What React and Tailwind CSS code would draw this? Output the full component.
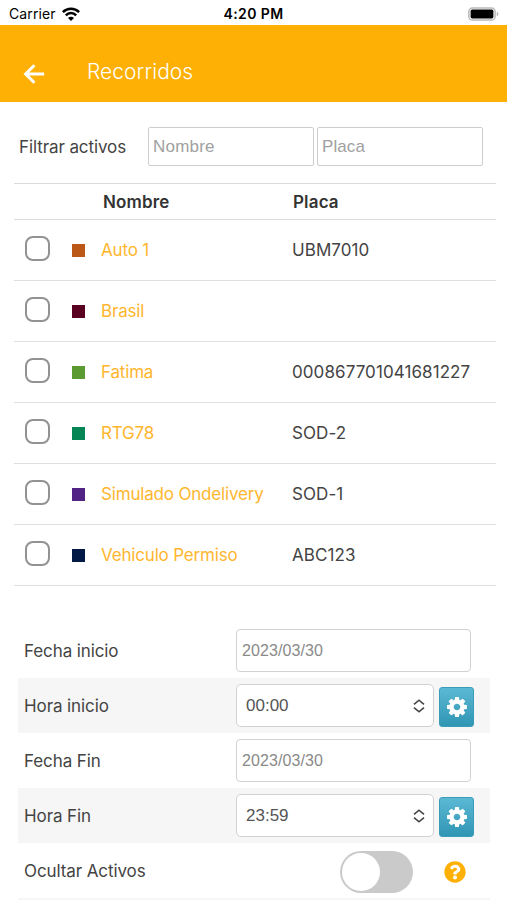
import { FaQuestionCircle } from 'react-icons/fa';

const activos = [
    { nombre: 'Auto 1', placa: 'UBM7010', color: 'bg-[#bb5817]' },
    { nombre: 'Brasil', placa: '', color: 'bg-[#5a0020]' },
    { nombre: 'Fatima', placa: '000867701041681227', color: 'bg-[#5b9a30]' },
    { nombre: 'RTG78', placa: 'SOD-2', color: 'bg-[#058554]' },
    { nombre: 'Simulado Ondelivery', placa: 'SOD-1', color: 'bg-[#512385]' },
    { nombre: 'Vehiculo Permiso', placa: 'ABC123', color: 'bg-[#021945]' },
];

const StatusBar = () => (
    <div className="h-[25px] px-[9px] pt-[3px] grid grid-cols-3 items-center text-black">
        <div className="flex items-center gap-[6px]">
            <span className="text-[14px] leading-5 tracking-[0.1px]">Carrier</span>
            <svg className="w-[18px] h-[14px]" viewBox="0 0 18 14" fill="none" stroke="currentColor" strokeWidth="2.5">
                <path d="M.9 5.1a11.4 11.4 0 0 1 16.2 0" />
                <path d="M3.8 8.3a7.3 7.3 0 0 1 10.4 0" />
                <path d="M9 14l-3-3.1a4.2 4.2 0 0 1 6 0z" fill="currentColor" stroke="none" />
            </svg>
        </div>
        <span className="text-center text-[14px] leading-5 font-semibold tracking-[0.4px]">4:20 PM</span>
        <svg className="-mr-px w-[31px] h-[14px] justify-self-end" viewBox="0 0 31 14">
            <rect x="0.9" y="0.9" width="26.2" height="12.2" rx="3.6" fill="#fff" stroke="#b9b9b9" strokeWidth="1.5" />
            <rect x="2.6" y="2.6" width="22.8" height="8.8" rx="1.6" fill="#000" />
            <path d="M28.8 4.8v4.4q1.6-.7 1.6-2.2t-1.6-2.2z" fill="#b0b0b0" />
        </svg>
    </div>
);

const Header = () => (
    <header className="h-[77px] bg-[#ffb004] pl-[23px] pt-4 flex items-center text-white">
        <svg className="w-[22px] h-5 mt-1" viewBox="0 0 22 20" fill="none" stroke="currentColor" strokeWidth="3">
            <path d="M21.2 10H3M11.4 1.2L2.6 10l8.8 8.8" />
        </svg>
        <h1 className="ml-[42px] text-[21px] font-light tracking-[0.05px]">Recorridos</h1>
    </header>
);

const Gear = () => (
    <button className="ml-[5px] mt-[3px] w-[35px] h-10 shrink-0 rounded-[3px] border border-[#3a9cb8] bg-linear-to-b from-[#5bb9d4] to-[#2f96b4] flex items-center justify-center text-white">
        <svg className="w-5 h-5" viewBox="0 128 1536 1536" fill="currentColor">
            <path d="M1024 896q0-106-75-181t-181-75-181 75-75 181 75 181 181 75 181-75 75-181zm512-109v222q0 12-8 23t-20 13l-185 28q-19 54-39 91 35 50 107 138 10 12 10 25t-9 23q-27 37-99 108t-94 71q-12 0-26-9l-138-108q-44 23-91 38-16 136-29 186-7 28-36 28h-222q-14 0-24.5-8.5t-11.5-21.5l-28-184q-49-16-90-37l-141 107q-10 9-25 9-14 0-25-11-126-114-165-168-7-10-7-23 0-12 8-23 15-21 51-66.5t54-70.5q-27-50-41-99l-183-27q-13-2-21-12.5t-8-23.5v-222q0-12 8-23t19-13l186-28q14-46 39-92-40-57-107-138-10-12-10-24 0-10 9-23 26-36 98.5-107.5t94.5-71.5q13 0 26 10l138 107q44-23 91-38 16-136 29-186 7-28 36-28h222q14 0 24.5 8.5t11.5 21.5l28 184q49 16 90 37l142-107q9-9 24-9 13 0 25 10 129 119 165 170 7 8 7 22 0 12-8 23-15 21-51 66.5t-54 70.5q26 50 41 98l183 28q13 2 21 12.5t8 23.5z" />
        </svg>
    </button>
);

const Fecha = ({ label }) => (
    <div className="h-[55px] pl-[6px] flex items-center">
        <span className="w-[212px] tracking-[-0.1px]">{label}</span>
        <div className="w-[235px] h-[43px] rounded-[4px] border-[1.5px] border-[#d2d2d2] bg-white px-[5px] flex items-center font-['Liberation_Sans',sans-serif] text-[16px] tracking-[0.1px] text-[#8a8a8a]">
            2023/03/30
        </div>
    </div>
);

const Hora = ({ label, value }) => (
    <div className="h-[55px] pl-[6px] flex items-center bg-[#f6f6f6]">
        <span className="w-[212px] tracking-[-0.1px]">{label}</span>
        <div className="w-[198px] h-[43px] shrink-0 rounded-[5px] border-[1.5px] border-[#d2d2d2] bg-white pl-[9px] pr-2 flex items-center justify-between font-['Liberation_Sans',sans-serif] text-[17px] text-[#555]">
            {value}
            <svg className="w-3 h-[14px]" viewBox="0 0 12 14" fill="none" stroke="#444" strokeWidth="1.6">
                <path d="M1 5.4L6 1.2l5 4.2M1 8.6l5 4.2 5-4.2" />
            </svg>
        </div>
        <Gear />
    </div>
);

export default function App() {
    return (
        <div className="w-[507px] h-[900px] overflow-hidden bg-white font-[Inter,sans-serif] text-[17px] leading-6 text-[#444]">
            <StatusBar />
            <Header />

            <div className="pt-[25px] pl-[19px] flex items-center">
                <span className="w-[129px] tracking-[-0.1px]">Filtrar activos</span>
                <input
                    className="w-[166px] h-[39px] rounded-[2px] border-[1.5px] border-[#cecece] px-1 font-['Liberation_Sans',sans-serif] text-[17px] tracking-[0.2px] placeholder:text-[#a0a0a0]"
                    placeholder="Nombre"
                />
                <input
                    className="ml-[3px] w-[166px] h-[39px] rounded-[2px] border-[1.5px] border-[#cecece] px-1 font-['Liberation_Sans',sans-serif] text-[17px] tracking-[0.1px] placeholder:text-[#a0a0a0]"
                    placeholder="Placa"
                />
            </div>

            <div className="mt-[17px] ml-[14px] w-[482px] border-t border-[#dcdcdc]">
                <div className="h-[36px] border-b border-[#dcdcdc] flex items-center font-semibold text-[#333] tracking-[0.15px]">
                    <span className="w-[190px] ml-[89px]">Nombre</span>
                    <span>Placa</span>
                </div>
                {activos.map((a) => (
                    <div key={a.nombre} className="h-[61px] border-b border-[#dfdfdf] pl-[11px] flex items-center">
                        <span className="w-[25px] h-[25px] mb-1 rounded-[8px] border-2 border-[#929292]" />
                        <span className={`ml-[22px] w-[13px] h-[13px] ${a.color}`} />
                        <span className="ml-[16px] w-[191px] tracking-[-0.18px] text-[#ffb62e]">{a.nombre}</span>
                        <span className="tracking-[0.08px]">{a.placa}</span>
                    </div>
                ))}
            </div>

            <div className="mt-[37px] ml-[18px] w-[472px]">
                <Fecha label="Fecha inicio" />
                <Hora label="Hora inicio" value="00:00" />
                <Fecha label="Fecha Fin" />
                <Hora label="Hora Fin" value="23:59" />
                <div className="h-[55px] pl-[6px] flex items-center">
                    <span className="w-[316px] tracking-[-0.1px]">Ocultar Activos</span>
                    <div className="w-[73px] h-[42px] mt-[2px] rounded-full bg-[#cacaca] p-[2px]">
                        <div className="w-[38px] h-[38px] rounded-full bg-white" />
                    </div>
                    <FaQuestionCircle className="ml-[31px] mt-[2px] w-[22px] h-[22px] text-[#ffb004]" />
                </div>
                <div className="h-[55px] bg-[#f6f6f6]" />
            </div>
        </div>
    );
}
